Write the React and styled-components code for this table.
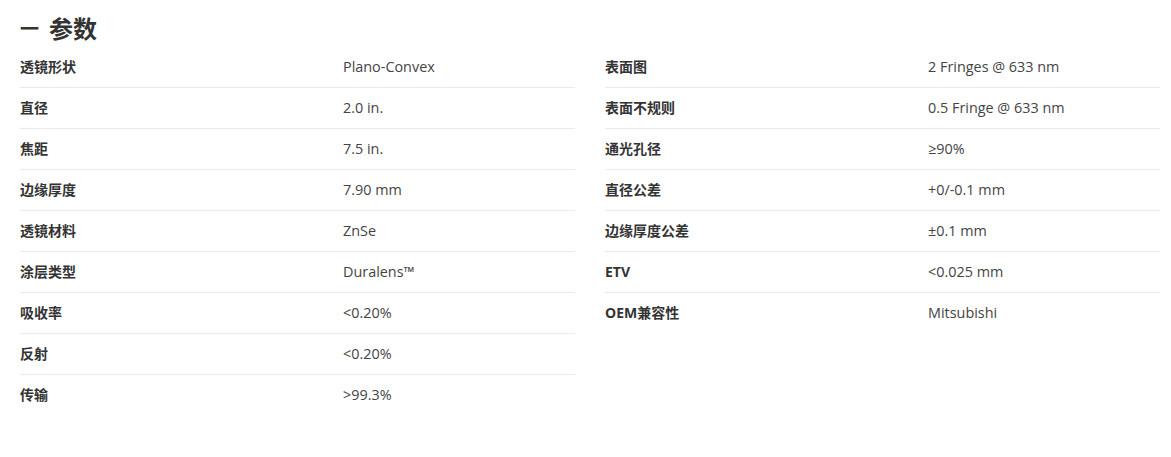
import React from "react";
import styled, { createGlobalStyle } from "styled-components";

const GlobalStyle = createGlobalStyle`
  body {
    margin: 0;
    background: #fff;
    font-family: "Open Sans", "Noto Sans CJK SC", sans-serif;
    color: #333;
  }
`;

const Page = styled.div`
  padding: 0 11px 0 20px;
`;

const Title = styled.h2`
  margin: 0;
  height: 47px;
  display: flex;
  align-items: center;
  gap: 10px;
  padding-top: 7px;
  box-sizing: border-box;
  font-size: 24px;
  font-weight: 700;
  color: #333;
  font-family: "Open Sans", "Noto Sans CJK SC", sans-serif;
`;

const Dash = styled.span`
  font-size: 19px;
  font-weight: 700;
  font-family: "Noto Sans CJK SC", sans-serif;
`;

const Columns = styled.div`
  display: grid;
  grid-template-columns: 1fr 1fr;
  column-gap: 30px;
  align-items: start;
`;

const Table = styled.div`
  display: flex;
  flex-direction: column;
`;

const Row = styled.div`
  display: grid;
  grid-template-columns: 323px 1fr;
  align-items: center;
  height: 40px;
  padding-bottom: 2px;
  box-sizing: content-box;
  height: 38px;
  font-size: 14px;
  & + & {
    border-top: 1px solid #ebebeb;
  }
`;

const Label = styled.div`
  font-weight: 700;
  color: #333;
  font-family: "Open Sans", "Noto Sans CJK SC", sans-serif;
`;

const Value = styled.div`
  color: #444;
  font-size: 14.4px;
`;

const left = [
  ["透镜形状", "Plano-Convex"],
  ["直径", "2.0 in."],
  ["焦距", "7.5 in."],
  ["边缘厚度", "7.90 mm"],
  ["透镜材料", "ZnSe"],
  ["涂层类型", "Duralens™"],
  ["吸收率", "<0.20%"],
  ["反射", "<0.20%"],
  ["传输", ">99.3%"],
];

const right = [
  ["表面图", "2 Fringes @ 633 nm"],
  ["表面不规则", "0.5 Fringe @ 633 nm"],
  ["通光孔径", "≥90%"],
  ["直径公差", "+0/-0.1 mm"],
  ["边缘厚度公差", "±0.1 mm"],
  ["ETV", "<0.025 mm"],
  ["OEM兼容性", "Mitsubishi"],
];

function SpecTable({ rows }) {
  return (
    <Table>
      {rows.map(([k, v]) => (
        <Row key={k}>
          <Label>{k}</Label>
          <Value>{v}</Value>
        </Row>
      ))}
    </Table>
  );
}

export default function App() {
  return (
    <>
      <GlobalStyle />
      <Page>
        <Title>
          <Dash>一</Dash>
          <span>参数</span>
        </Title>
        <Columns>
          <SpecTable rows={left} />
          <SpecTable rows={right} />
        </Columns>
      </Page>
    </>
  );
}
